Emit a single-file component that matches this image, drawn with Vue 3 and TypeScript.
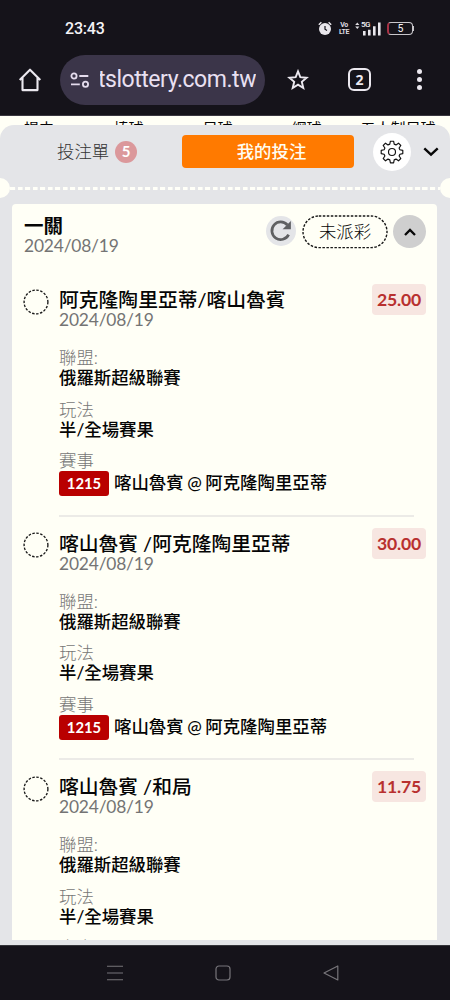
<script setup lang="ts">
interface Bet {
  title: string
  date: string
  odds: string
  league: string
  play: string
  code: string
  match: string
}

const sports: string[] = ['場中', '棒球', '足球', '網球', '五人制足球']

const common = {
  date: '2024/08/19',
  league: '俄羅斯超級聯賽',
  play: '半/全場賽果',
  code: '1215',
  match: '喀山魯賓 @ 阿克隆陶里亞蒂',
}

const bets: Bet[] = [
  { title: '阿克隆陶里亞蒂/喀山魯賓', odds: '25.00', ...common },
  { title: '喀山魯賓 /阿克隆陶里亞蒂', odds: '30.00', ...common },
  { title: '喀山魯賓 /和局', odds: '11.75', ...common },
]
</script>

<template>
  <div class="screen">
    <header class="status">
      <span class="clock">23:43</span>
      <div class="indicators">
        <svg class="alarm" width="14" height="15" viewBox="0 0 14 15">
          <circle cx="7" cy="8" r="6" fill="#e9e7ec" />
          <path d="M.8 3.7 3.4 1.3M13.2 3.7 10.6 1.3" stroke="#e9e7ec" stroke-width="1.5" />
          <path d="M7 5v3.2l2 1.2" fill="none" stroke="#15131a" stroke-width="1.2" />
        </svg>
        <span class="volte"><span>Vo</span><span>LTE</span></span>
        <div class="signal">
          <svg width="26" height="15" viewBox="0 0 26 15">
            <path d="M.2 4.1 2.3 1.6 4.4 4.1zM.2 5.6h4.2L2.3 8z" fill="#dddbe0" />
            <path d="M8 10h2.6v4.5H8zM13 8.8h2.6v5.7H13zM18 5.3h2.6v9.2H18zM23 1.5h2.6v13H23z" fill="#e9e7ec" />
          </svg>
          <span class="gen">5G</span>
        </div>
        <div class="battery"><span>5</span></div>
        <i class="cap" />
      </div>
    </header>

    <nav class="browser">
      <svg class="home" width="24" height="24" viewBox="0 0 24 24" fill="none" stroke="#ebe8ef" stroke-width="2.1" stroke-linejoin="round">
        <path d="M1.7 12 12 1.7 22.3 12M4.5 9.8v12.3h15V9.8" />
      </svg>
      <div class="address">
        <svg width="20" height="16" viewBox="0 0 20 16" fill="none" stroke="#e4dced" stroke-width="1.8">
          <circle cx="4" cy="4" r="2.6" />
          <path d="M9.3 4H18.3M1 12.3h8.8" />
          <circle cx="15.5" cy="12.3" r="2.6" />
        </svg>
        <span class="url"><span>tslottery.com.tw</span></span>
      </div>
      <svg class="star" width="22" height="22" viewBox="0 0 22 22" fill="none" stroke="#ebe8ef" stroke-width="1.9">
        <path d="m11 2.4 2.3 5.8 6.3.5-4.8 4.1 1.5 6.2L11 15.7 5.7 19l1.5-6.2-4.8-4.1 6.3-.5z" />
      </svg>
      <div class="tabs-count">2</div>
      <div class="dots"><i /><i /><i /></div>
    </nav>

    <div class="page">
      <div class="sports">
        <span v-for="s in sports" :key="s">{{ s }}</span>
      </div>

      <section class="sheet">
        <div class="switcher">
          <div class="slip">投注單<b>5</b></div>
          <div class="mine">我的投注</div>
          <div class="gear">
            <svg width="24" height="24" viewBox="0 0 24 24" fill="none" stroke="#111" stroke-width="1.15" stroke-linejoin="round">
              <path d="M10.4 1.2h3.2l.6 2.9 1.8.8 2.5-1.7 2.3 2.3-1.7 2.5.8 1.8 2.9.6v3.2l-2.9.6-.8 1.8 1.7 2.5-2.3 2.3-2.5-1.7-1.8.8-.6 2.9h-3.2l-.6-2.9-1.8-.8-2.5 1.7-2.3-2.3 1.7-2.5-.8-1.8-2.9-.6v-3.2l2.9-.6.8-1.8-1.7-2.5 2.3-2.3L8 4.9l1.8-.8z" />
              <circle cx="12" cy="12" r="3.5" />
            </svg>
          </div>
          <svg class="down" width="16" height="10" viewBox="0 0 16 10" fill="none" stroke="#080808" stroke-width="2.4">
            <path d="m1.3 1.3 6.7 6.4 6.7-6.4" />
          </svg>
        </div>

        <div class="tear"><i /><span /><i /></div>

        <article class="card">
          <div class="summary">
            <div class="heading">
              <h2>一關</h2>
              <p class="date">2024/08/19</p>
            </div>
            <div class="refresh">
              <svg width="22" height="22" viewBox="0 0 22 22">
                <path d="M18.6 14.6A8.8 8.8 0 1 1 17.4 5" fill="none" stroke="#5f6062" stroke-width="2.7" />
                <path d="M20.9.9V9.2H12.6z" fill="#5f6062" />
              </svg>
            </div>
            <div class="state">
              <svg width="86" height="34" viewBox="0 0 86 34">
                <rect x="1" y="1" width="84" height="31.6" rx="15.8" fill="none" stroke="#181818" stroke-width="1.4" stroke-dasharray="2.5 1.5" />
              </svg>
              <span>未派彩</span>
            </div>
            <div class="collapse">
              <svg width="12" height="8" viewBox="0 0 12 8" fill="none" stroke="#080808" stroke-width="2.3">
                <path d="m1 7 5-5 5 5" />
              </svg>
            </div>
          </div>

          <div v-for="bet in bets" :key="bet.title" class="bet">
            <svg class="ring" width="26" height="26" viewBox="0 0 26 26">
              <circle cx="13" cy="13" r="11.9" fill="none" stroke="#181818" stroke-width="1.35" stroke-dasharray="2.5 1.5" />
            </svg>
            <div class="body">
              <div class="top">
                <div>
                  <h3>{{ bet.title }}</h3>
                  <p class="date">{{ bet.date }}</p>
                </div>
                <span class="odds">{{ bet.odds }}</span>
              </div>
              <dl>
                <dt>聯盟:</dt>
                <dd>{{ bet.league }}</dd>
                <dt>玩法</dt>
                <dd>{{ bet.play }}</dd>
                <dt>賽事</dt>
                <dd class="match"><b>{{ bet.code }}</b><span>{{ bet.match }}</span></dd>
              </dl>
            </div>
          </div>
        </article>
      </section>
    </div>

    <footer class="keys">
      <svg width="16" height="16" viewBox="0 0 16 16" stroke="#77757a" stroke-width="1.1"><path d="M0 1.3h16M0 8h16M0 14.7h16" /></svg>
      <svg width="16" height="16" viewBox="0 0 16 16" fill="none" stroke="#77757a" stroke-width="1.2"><rect x="1" y="1" width="14" height="14" rx="3" /></svg>
      <svg width="16" height="16" viewBox="0 0 16 16" fill="none" stroke="#77757a" stroke-width="1.2" stroke-linejoin="round"><path d="M14.8 1v14L1 8z" /></svg>
    </footer>
  </div>
</template>

<style>
body {
  margin: 0;
  overflow: hidden;
}
</style>

<style scoped>
* {
  box-sizing: border-box;
}
svg {
  display: block;
  flex: none;
}
h2,
h3,
p,
dl,
dt,
dd {
  margin: 0;
  white-space: nowrap;
}
.screen {
  width: 450px;
  height: 1000px;
  display: flex;
  flex-direction: column;
  overflow: hidden;
  background: #15131a;
  font-family: Lato, 'Noto Sans CJK TC', sans-serif;
  color: #050505;
}
.status {
  height: 54px;
  flex: none;
  display: flex;
  align-items: center;
  justify-content: space-between;
  padding: 3px 36px 0 65px;
  color: #f4f2f6;
}
.clock {
  font: 500 16px/20px Roboto, sans-serif;
  letter-spacing: -0.2px;
}
.indicators {
  display: flex;
  align-items: center;
}
.volte {
  display: flex;
  flex-direction: column;
  align-items: center;
  width: 10px;
  margin-left: 7px;
  font: 700 7px/7px Roboto, sans-serif;
  letter-spacing: -0.5px;
  color: #dddbe0;
}
.signal {
  position: relative;
  margin-left: 6px;
}
.gen {
  position: absolute;
  left: 6px;
  top: 0;
  font: 500 8px/8px Roboto, sans-serif;
  letter-spacing: -0.6px;
}
.battery {
  width: 26px;
  height: 13px;
  margin-left: 6px;
  border: 1px solid #c8c6cb;
  border-left: 2px solid #a83246;
  border-radius: 4px;
  text-align: center;
  font: 400 10.5px/11px Roboto, sans-serif;
}
.cap {
  width: 1px;
  height: 5px;
  background: #c8c6cb;
}
.browser {
  height: 62px;
  flex: none;
  display: flex;
  align-items: center;
  padding: 0 0 10px 18px;
  border-bottom: 1px solid #3a3740;
}
.address {
  width: 205px;
  height: 50px;
  margin-left: 18px;
  padding-left: 10px;
  border-radius: 25px;
  background: #3b3549;
  display: flex;
  align-items: center;
}
.url {
  margin-left: 10px;
  width: 156px;
  overflow: hidden;
  display: flex;
  justify-content: flex-end;
  font: 400 23px/34px Roboto, sans-serif;
  letter-spacing: -0.45px;
  color: #e9e0f2;
  white-space: nowrap;
}
.star {
  margin-left: 22px;
}
.tabs-count {
  width: 23px;
  height: 23px;
  margin-left: 39px;
  border: 2px solid #ebe8ef;
  border-radius: 6px;
  color: #ebe8ef;
  text-align: center;
  font: 700 14px/19px 'Open Sans', sans-serif;
}
.dots {
  display: flex;
  flex-direction: column;
  gap: 2.7px;
  margin-left: 46px;
}
.dots i {
  width: 5px;
  height: 5px;
  border-radius: 50%;
  background: #ebe8ef;
}
.page {
  height: 829px;
  flex: none;
  background: #fffff6;
  display: flex;
  flex-direction: column;
  overflow: hidden;
}
.sports {
  height: 9px;
  flex: none;
  overflow: hidden;
  display: grid;
  grid-template-columns: 84px 89px 89px 89px 94px;
  justify-items: center;
  font-size: 15px;
  line-height: 20px;
  padding-top: 2px;
}
.sports span {
  white-space: nowrap;
}
.sports span:first-child {
  margin-right: 6px;
}
.sheet {
  flex: 1;
  min-height: 0;
  border-radius: 14px 14px 0 0;
  background: #e4e5e8;
  display: flex;
  flex-direction: column;
  padding-bottom: 5px;
}
.switcher {
  height: 53px;
  flex: none;
  display: flex;
  align-items: center;
  padding-left: 57px;
}
.slip {
  width: 125px;
  display: flex;
  align-items: center;
  font-size: 17.4px;
  font-weight: 300;
  line-height: 24px;
  color: #333;
}
.slip b {
  width: 22px;
  height: 22px;
  margin-left: 6px;
  border-radius: 50%;
  background: #db989b;
  color: #fff;
  font-size: 15px;
  font-weight: 700;
  line-height: 21px;
  text-align: center;
}
.mine {
  width: 172px;
  height: 33px;
  border-radius: 4px;
  background: #ff7a00;
  color: #fffdf2;
  font-size: 17.4px;
  font-weight: 500;
  line-height: 33px;
  text-align: center;
  padding-left: 7px;
}
.gear {
  width: 38px;
  height: 38px;
  margin-left: 19px;
  border-radius: 50%;
  background: #fff;
  display: grid;
  place-items: center;
}
.down {
  margin-left: 12px;
}
.tear {
  height: 20px;
  flex: none;
  display: flex;
  align-items: center;
  justify-content: space-between;
}
.tear i {
  width: 10px;
  height: 20px;
  border-radius: 0 10px 10px 0;
  background: #fffff6;
}
.tear i:last-child {
  border-radius: 10px 0 0 10px;
}
.tear span {
  flex: 1;
  height: 3px;
  margin-top: 1px;
  background: repeating-linear-gradient(90deg, #fffff8 0 4.6px, #e4e5e8 5.6px 7.5px);
}
.card {
  flex: 1;
  min-height: 0;
  margin: 6px 13px 0 12px;
  border-radius: 4px 4px 0 0;
  background: #fffff6;
  overflow: hidden;
}
.summary {
  height: 69px;
  display: flex;
  align-items: flex-start;
  padding: 11px 11px 0 12px;
}
.heading {
  flex: 1;
}
h2 {
  font-size: 19.5px;
  font-weight: 700;
  line-height: 21px;
}
.date {
  font-size: 17.4px;
  line-height: 20px;
  letter-spacing: -0.18px;
  color: #747474;
}
.refresh {
  width: 30px;
  height: 30px;
  margin: 1px 6px 0 0;
  border-radius: 50%;
  background: #e4e5e8;
  display: grid;
  place-items: center;
}
.state {
  display: grid;
  width: 86px;
  height: 34px;
  margin-right: 5px;
}
.state > * {
  grid-area: 1 / 1;
}
.state span {
  font-size: 17.4px;
  font-weight: 300;
  line-height: 34px;
  text-align: center;
}
.collapse {
  width: 33px;
  height: 33px;
  border-radius: 50%;
  background: #cfcfcf;
  display: grid;
  place-items: center;
}
.bet {
  height: 243.5px;
  padding-left: 11px;
  display: flex;
  align-items: flex-start;
}
.ring {
  margin-top: 15.5px;
}
.body {
  width: 355px;
  height: 243.5px;
  margin-left: 10px;
  padding-top: 15px;
  border-bottom: 2px solid #ecebe7;
}
.top {
  width: 367px;
  display: flex;
  justify-content: space-between;
}
h3 {
  font-size: 19.8px;
  font-weight: 500;
  line-height: 22px;
}
.odds {
  width: 54px;
  height: 31px;
  margin-top: -4px;
  border-radius: 4px;
  background: #f7e6e1;
  color: #b8302f;
  font-size: 17.6px;
  font-weight: 700;
  line-height: 31px;
  letter-spacing: -0.2px;
  text-align: center;
}
dl {
  margin-top: 17px;
  font-size: 17.4px;
}
dt {
  height: 21px;
  line-height: 21px;
  font-weight: 300;
  color: #777;
}
dd {
  height: 30.5px;
  line-height: 20px;
  font-weight: 500;
}
.match {
  display: flex;
}
.match b {
  width: 50px;
  height: 25px;
  border-radius: 3px;
  background: #b90000;
  color: #fff;
  font-size: 14.8px;
  font-weight: 700;
  line-height: 25px;
  text-align: center;
}
.match span {
  margin-left: 5px;
  line-height: 24px;
  word-spacing: -0.8px;
}
.keys {
  flex: 1;
  display: flex;
  align-items: center;
  justify-content: center;
  gap: 92px;
  padding-right: 5px;
  border-top: 1px solid #35353a;
}
</style>
